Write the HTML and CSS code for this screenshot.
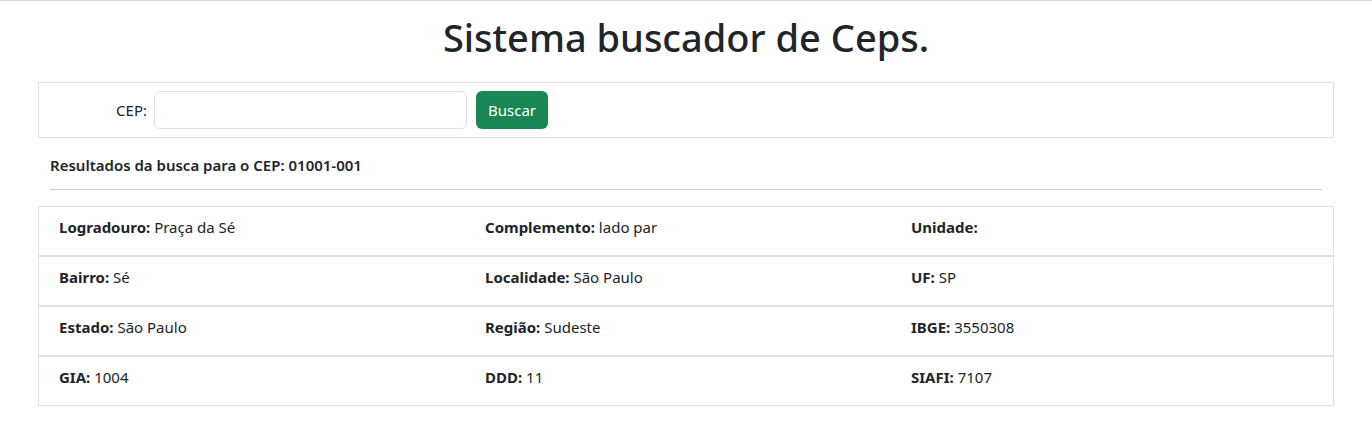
FILE: index.html
```html
<!DOCTYPE html>
<html lang="pt-BR">
<head>
<meta charset="utf-8">
<title>Sistema buscador de Ceps</title>
<link rel="stylesheet" href="styles.css">
</head>
<body>
<div class="page">
  <h1 class="title">Sistema buscador de Ceps.</h1>
  <form class="search">
    <label class="search-label" for="cep">CEP:</label>
    <input class="search-input" id="cep" type="text">
    <button class="search-btn" type="button">Buscar</button>
  </form>
  <div class="result-head">
    <p class="result-title">Resultados da busca para o CEP: 01001-001</p>
    <hr class="divider">
  </div>
  <div class="results">
    <div class="row">
      <div class="cell"><b>Logradouro:</b> Praça da Sé</div>
      <div class="cell"><b>Complemento:</b> lado par</div>
      <div class="cell"><b>Unidade:</b></div>
    </div>
    <div class="row">
      <div class="cell"><b>Bairro:</b> Sé</div>
      <div class="cell"><b>Localidade:</b> São Paulo</div>
      <div class="cell"><b>UF:</b> SP</div>
    </div>
    <div class="row">
      <div class="cell"><b>Estado:</b> São Paulo</div>
      <div class="cell"><b>Região:</b> Sudeste</div>
      <div class="cell"><b>IBGE:</b> 3550308</div>
    </div>
    <div class="row">
      <div class="cell"><b>GIA:</b> 1004</div>
      <div class="cell"><b>DDD:</b> 11</div>
      <div class="cell"><b>SIAFI:</b> 7107</div>
    </div>
  </div>
</div>
</body>
</html>
```
FILE: styles.css
```css
* { box-sizing: border-box; }
html, body { margin: 0; background: #fff; }
body {
  border-top: 1px solid #d4d4d4;
  font-family: "Noto Sans", "Open Sans", sans-serif;
  font-size: 15px;
  color: #212529;
}
.page { padding: 0 38px; }
.title {
  margin: 12px 0 21px;
  text-align: center;
  font-size: 38px;
  line-height: 48px;
  font-weight: 500;
}
.search {
  display: flex;
  align-items: center;
  border: 1px solid #dee2e6;
  padding: 8px;
  margin: 0;
}
.search-label {
  width: 100px;
  text-align: right;
  margin-right: 7px;
  font-size: 15px;
}
.search-input {
  width: 313px;
  height: 38px;
  border: 1px solid #dee2e6;
  border-radius: 6px;
  padding: 6px 12px;
  font: inherit;
  margin-right: 9px;
}
.search-btn {
  height: 38px;
  width: 72px;
  border: 0;
  border-radius: 6px;
  background: #198754;
  color: #fff;
  font-family: inherit;
  font-size: 15px;
  padding: 0;
}
.result-head { padding: 0 12px; }
.result-title {
  margin: 15px 0 12px;
  line-height: 24px;
  font-weight: 600;
  font-size: 15px;
}
.divider {
  margin: 0 0 16px;
  border: 0;
  border-top: 1px solid #c8c9ca;
}
.row {
  display: grid;
  grid-template-columns: repeat(3, 1fr);
  align-items: start;
  height: 50px;
  border: 1px solid #dee2e6;
  padding: 8px 8px 0;
}
.cell { padding: 0 12px; line-height: 24px; }
.cell b { font-weight: 700; }
```
